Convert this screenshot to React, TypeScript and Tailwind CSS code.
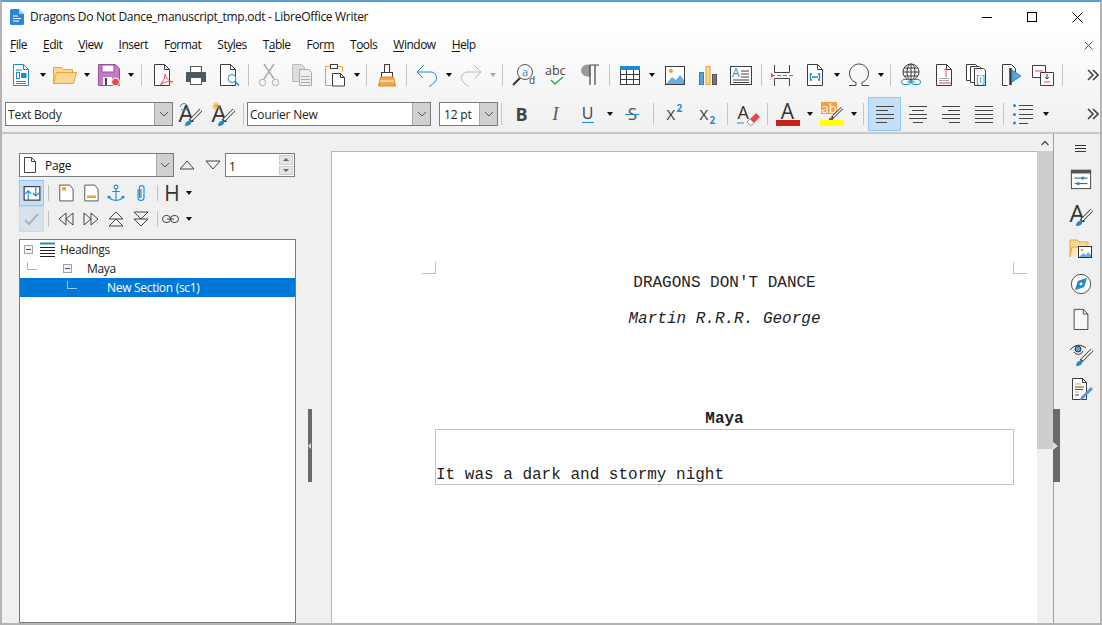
import React from "react";

const B = "#1e8bcd";
const D = "#3c3c3c";
const O = "#e8a33d";
const R = "#e8474c";

function Svg({ children, s = 24 }: { children: React.ReactNode; s?: number }) {
  return (
    <svg width={s} height={s} viewBox="0 0 24 24" fill="none" stroke={D} strokeWidth={1}>
      {children}
    </svg>
  );
}

function Cell({ children, active }: { children?: React.ReactNode; active?: boolean }) {
  return (
    <div className={active ? "w-[33px] h-[34px] shrink-0 flex items-center justify-center bg-[#c4dff6] border border-[#92c9f9]" : "w-[33px] h-[34px] shrink-0 flex items-center justify-center"}>
      {children}
    </div>
  );
}

function Dd({ wide, dim }: { wide?: boolean; dim?: boolean }) {
  return (
    <div className={wide ? "w-[12px] h-[34px] shrink-0 flex items-center justify-center" : "w-[11px] h-[34px] shrink-0 flex items-center justify-center"}>
      <div className={dim ? "w-0 h-0 border-x-[3.5px] border-x-transparent border-t-[4px] border-t-[#a8a8a8]" : "w-0 h-0 border-x-[3.5px] border-x-transparent border-t-[4px] border-t-[#111]"} />
    </div>
  );
}

function Sep({ w }: { w: 7 | 8 | 9 | 10 }) {
  const c = { 7: "w-[7px]", 8: "w-[8px]", 9: "w-[9px]", 10: "w-[10px]" }[w];
  return (
    <div className={c + " shrink-0 flex items-center justify-center"}>
      <div className="w-px h-[22px] bg-[#c4c4c4]" />
    </div>
  );
}

const Chevrons = () => (
  <svg width="12" height="12" viewBox="0 0 12 12" fill="none" stroke="#444" strokeWidth={1.6}>
    <path d="M1 1l5 5-5 5M6 1l5 5-5 5" />
  </svg>
);

function Combo({ w, text, arrowW = "w-[18px]" }: { w: string; text: React.ReactNode; arrowW?: string }) {
  return (
    <div className={w + " h-[24px] shrink-0 flex bg-white border border-[#7a7a7a] text-[12px] text-[#222]"}>
      <div className="flex-1 pl-[2px] pt-[2px] overflow-hidden whitespace-nowrap flex items-center tracking-[-0.2px]">{text}</div>
      <div className={arrowW + " bg-[#d0d0d0] border-l border-[#a8a8a8] flex items-center justify-center"}>
        <svg width="10" height="6" viewBox="0 0 10 6" fill="none" stroke="#555"><path d="M1 1l4 4 4-4" /></svg>
      </div>
    </div>
  );
}

const NewDoc = () => (
  <Svg>
    <path d="M4.5 1.5h10l5 5v16h-15z" stroke={B} fill="#fff" />
    <path d="M14.5 1.5v5h5" stroke={B} />
    <path d="M7 7h6M7 18.5h10M7 20.500h10" stroke={B} />
    <rect x="7.500" y="9.500" width="3" height="6" fill="none" stroke={B} />
    <rect x="12" y="10" width="5.500" height="5" fill={B} stroke="none" />
  </Svg>
);
const Open = () => (
  <Svg>
    <path d="M0.500 20.500v-16h8l2 2h9v3" stroke={O} fill="#fbd78f" />
    <path d="M0.500 20.500l3-11h20l-3 11z" stroke={O} fill="#fbd78f" />
  </Svg>
);
const Save = () => (
  <Svg>
    <path d="M1.500 1.500h17l4 4v17h-21z" fill="#c57ac5" stroke="#9b4f9b" />
    <rect x="5" y="2" width="12" height="7" fill="#fff" stroke="#9b4f9b" />
    <rect x="6" y="14" width="9" height="8" fill="#fff" stroke="none" />
    <rect x="8" y="15" width="2" height="7" fill="#444" stroke="none" />
    <circle cx="18.500" cy="19" r="4" fill={R} stroke="#fff" />
  </Svg>
);
const Pdf = () => (
  <Svg>
    <path d="M3.500 1.500h10l5 5v16h-15z" fill="#fff" />
    <path d="M13.500 1.500v5h5" />
    <path d="M9 22c4-4 5-8 5-11 1 4 3 7 8 8-5-1-9 0-13 3z" stroke={R} fill="#fff" />
  </Svg>
);
const Print = () => (
  <Svg>
    <rect x="6.500" y="3.500" width="11" height="6" fill="#fff" stroke="#4d5a64" />
    <path d="M2 9h20v10H2z" fill="#4d5a64" stroke="none" />
    <rect x="6.500" y="14.500" width="11" height="7" fill="#fff" stroke="#4d5a64" />
  </Svg>
);
const Preview = () => (
  <Svg>
    <path d="M3.500 1.500h10l5 5v16h-15z" fill="#fff" />
    <path d="M13.500 1.500v5h5" />
    <circle cx="15" cy="15.500" r="4" stroke={B} fill="#fff" />
    <path d="M18 18.500l4 4" stroke={B} strokeWidth={1.6} />
  </Svg>
);
const Cut = () => (
  <Svg>
    <path d="M7 1l10 15M17 1L7 16" stroke="#aaa" strokeWidth={1.5} />
    <circle cx="5.500" cy="19.500" r="3.200" stroke="#aaa" />
    <circle cx="18.500" cy="19.500" r="3.200" stroke="#aaa" />
  </Svg>
);
const Copy = () => (
  <Svg>
    <path d="M2.500 1.500h9l3 3v14h-12z" fill="#ddd" stroke="#bbb" />
    <path d="M9.500 6.500h9l3 3v13h-12z" fill="#eee" stroke="#aaa" />
    <path d="M11 13.500h9M11 16.500h9M11 19.500h9" stroke="#aaa" />
  </Svg>
);
const Paste = () => (
  <Svg>
    <path d="M7 3.500H2.500v19H9M15 3.500h4.500V9" stroke={O} fill="none" />
    <rect x="7.500" y="1.500" width="7" height="4" fill="#fff" />
    <path d="M9.500 10.500h8l4 4v8.500h-12z" fill="#fff" />
    <path d="M17.500 10.500v4h4" />
  </Svg>
);
const Clone = () => (
  <Svg>
    <rect x="9.500" y="1.500" width="5" height="8" fill="#fff" />
    <rect x="6.500" y="9.500" width="11" height="5" fill="#fff" />
    <path d="M5.500 14h13l2 9H3.500z" fill="#f8a445" stroke="#e08b2c" />
    <path d="M5 18h14" stroke="#fff" />
  </Svg>
);
const Undo = () => (
  <Svg>
    <path d="M2 9h13a6 6 0 0 1 5 10l-6 5M2 9l7-7M2 9l6 6" stroke={B} />
  </Svg>
);
const Redo = () => (
  <Svg>
    <path d="M22 9H9a6 6 0 0 0-5 10l6 5M22 9l-7-7M22 9l-6 6" stroke="#bbb" />
  </Svg>
);
const Find = () => (
  <Svg>
    <circle cx="13" cy="9" r="7.500" stroke="#555" />
    <path d="M8 15l-7 7" stroke="#333" strokeWidth={2} />
    <text x="10" y="13" fontSize="11" fill={B} stroke="none" fontFamily="'Open Sans',sans-serif">a</text>
    <text x="17" y="21" fontSize="10" fill={D} stroke="none" fontFamily="'Open Sans',sans-serif">d</text>
  </Svg>
);
const Abc = () => (
  <Svg>
    <text x="0" y="12" fontSize="12.500" fill="#444" stroke="none" fontFamily="'Open Sans',sans-serif">abc</text>
    <path d="M6 17l4 4 8-7" stroke="#2eae5a" strokeWidth={1.6} />
  </Svg>
);
const Pilcrow = () => (
  <Svg>
    <path d="M12 2H9a5 5 0 0 0 0 11h3z" fill="#999" stroke="#999" />
    <path d="M12 2h9M12 2v20M17 2v20" stroke="#444" strokeWidth={1.2} />
  </Svg>
);
const Table = () => (
  <Svg>
    <rect x="2.500" y="3.500" width="19" height="18" fill="#fff" />
    <rect x="2" y="3" width="20" height="4" fill={B} stroke="none" />
    <path d="M2.500 11.500h19M2.500 16.500h19M8.500 7v14M15.500 7v14" />
  </Svg>
);
const Img = () => (
  <Svg>
    <rect x="2.500" y="3.500" width="19" height="18" fill="#fff" />
    <circle cx="8" cy="8" r="2" fill={O} stroke="none" />
    <path d="M3 21l6-7 4 3 4-5 4 5v4z" fill="#6aaee0" stroke="none" />
  </Svg>
);
const Chart = () => (
  <Svg>
    <rect x="3.500" y="9.500" width="4" height="12" fill="#5aa3dc" stroke={B} />
    <rect x="10" y="3.500" width="4" height="18" fill="#fbd78f" stroke={O} />
    <rect x="16.500" y="11.500" width="4" height="10" fill="#777" stroke="#555" />
  </Svg>
);
const TextBox = () => (
  <Svg>
    <rect x="1.500" y="3.500" width="21" height="18" fill="#fff" />
    <text x="3" y="14" fontSize="12" fill={B} stroke="none" fontFamily="'Open Sans',sans-serif">A</text>
    <path d="M12 8h8M12 11h8M12 14h8M4 17h16M4 19.500h16" />
  </Svg>
);
const PageBreak = () => (
  <Svg>
    <path d="M4.500 2v7.500h15V2M4.500 23v-7.500h15V23" stroke="#444" />
    <path d="M1 12.500h22" stroke={R} strokeDasharray="4 2" />
    <path d="M1 10l3 2.500-3 2.500z" fill={R} stroke="none" />
  </Svg>
);
const Field = () => (
  <Svg>
    <path d="M4.500 1.500h10l5 5v16h-15z" fill="#fff" />
    <path d="M14.500 1.500v5h5" />
    <path d="M9 11H7.500v6H9M15 11h1.500v6H15M9 14h6" stroke={B} strokeWidth={1.4} />
  </Svg>
);
const Omega = () => (
  <Svg>
    <path d="M2 22.500h7v-3a9.500 9.500 0 1 1 6 0v3h7" stroke="#444" />
  </Svg>
);
const Globe = () => (
  <Svg>
    <circle cx="12" cy="9" r="8" />
    <path d="M4 9h16M5 5h14M5 13h14M12 1v16" />
    <ellipse cx="12" cy="9" rx="4" ry="8" />
    <rect x="2.500" y="16.500" width="9" height="5" rx="2.500" fill="#fff" stroke={B} />
    <rect x="12.500" y="16.500" width="9" height="5" rx="2.500" fill="#fff" stroke={B} />
    <path d="M8 19h8" stroke={B} />
  </Svg>
);
const Footnote = () => (
  <Svg>
    <path d="M4.500 1.500h10l5 5v16h-15z" fill="#fff" />
    <path d="M14.500 1.500v5h5" />
    <path d="M12 7l2-1v8" stroke={R} />
    <path d="M7 15.500h10M7 17.500h10" stroke="#aaa" />
    <path d="M7 20h12" stroke={R} />
  </Svg>
);
const Pages = () => (
  <Svg>
    <path d="M1.500 1.500h9l2 2v14h-11z" fill="#fff" />
    <path d="M5.500 3.500h9l2 2v14h-11z" fill="#fff" />
    <path d="M9.500 5.500h9l2 2v15h-11z" fill="#fff" />
    <text x="11" y="20" fontSize="10" fill={B} stroke="none" fontFamily="'Open Sans',sans-serif">[i]</text>
  </Svg>
);
const Xref = () => (
  <Svg>
    <path d="M4.500 1.500h9l4 4v4M4.500 1.500v21h5" />
    <path d="M12.500 5v17" stroke="#333" strokeWidth={2.500} />
    <path d="M14 7l9 6-9 6z" fill="#5aa3dc" stroke={B} />
  </Svg>
);
const Comment = () => (
  <Svg>
    <path d="M1.500 2.500h13v12h-13z" fill="#fff" />
    <path d="M9.500 9.500h13v13h-13z" fill="#fff" />
    <path d="M4 8h8M13 19h6" stroke={R} />
    <path d="M16 11v5m-2-2l2 2 2-2" />
  </Svg>
);
const Brush = () => (
  <>
    <path d="M23 8L12 19" stroke="#333" strokeWidth={3.500} />
    <path d="M23 8L13 18" stroke="#fff" strokeWidth={1.800} />
    <path d="M7 24c0-4 3-6 6-5 1 3-2 5-6 5z" fill={B} stroke="none" />
  </>
);
const StyleIco = ({ top }: { top: React.ReactNode }) => (
  <div className="relative w-[24px] h-[24px]">
    <span className="absolute left-[1px] top-[-2px] text-[24px] leading-[26px] text-[#333]">A</span>
    <svg width="24" height="24" viewBox="0 0 24 24" fill="none" className="absolute left-0 top-0">
      {top}
      <Brush />
    </svg>
  </div>
);
const AClear = () => (
  <div className="relative w-[24px] h-[24px]">
    <span className="absolute left-[2px] top-[0px] text-[18px] leading-[20px] text-[#333]">A</span>
    <svg width="24" height="24" viewBox="0 0 24 24" fill="none" className="absolute left-0 top-0">
      <path d="M1 21h7" stroke={B} />
      <path d="M14 17l6-6 4 4-6 6z" fill={R} />
      <path d="M11 20l3-3 4 4-2 2h-2z" fill="#fff" stroke="#999" />
    </svg>
  </div>
);
const AColor = () => (
  <div className="w-[24px] h-[24px] flex flex-col items-center">
    <span className="text-[21px] leading-[18px] h-[18px] text-[#333]">A</span>
    <div className="w-[24px] h-[6px] bg-[#c9211e]" />
  </div>
);
const Highlight = () => (
  <div className="relative w-[24px] h-[24px]">
    <div className="absolute left-[1px] top-0 w-[16px] h-[12px] bg-[#fb9d3c]" />
    <span className="absolute left-[2px] top-[-2px] text-[13px] leading-[16px] text-white">ab</span>
    <svg width="24" height="24" viewBox="0 0 24 24" fill="none" className="absolute left-0 top-0">
      <path d="M22 6L12 16" stroke="#333" strokeWidth={3} />
      <path d="M22 6L13 15" stroke="#fff" strokeWidth={1.2} />
      <path d="M9 17h4" stroke="#333" strokeWidth={1.500} />
    </svg>
    <div className="absolute left-0 top-[18px] w-[24px] h-[6px] bg-[#ffff00]" />
  </div>
);
const Align = ({ lines }: { lines: string }) => (
  <Svg>
    <path d={lines} stroke="#444" />
  </Svg>
);
const ListIco = () => (
  <Svg>
    <path d="M7 3.500h14M7 7.500h14M7 12.500h14M7 16.500h14M7 21.500h9" stroke="#444" />
    <circle cx="2.500" cy="3.500" r="1.500" fill={B} stroke="none" />
    <circle cx="2.500" cy="12.500" r="1.500" fill={B} stroke="none" />
    <circle cx="2.500" cy="21" r="1.500" fill={B} stroke="none" />
  </Svg>
);
const XSup = ({ sup }: { sup: boolean }) => (
  <div className="relative w-[24px] h-[24px] text-[#333]">
    <span className="absolute left-[4px] top-[2px] text-[15px] leading-[20px]">X</span>
    <span className={sup ? "absolute left-[14px] top-0 text-[10px] leading-[12px] font-bold text-[#1e8bcd]" : "absolute left-[14px] top-[12px] text-[10px] leading-[12px] font-bold text-[#1e8bcd]"}>2</span>
  </div>
);

const M = ({ a, b }: { a?: string; b: string }) => (
  <span>
    {a}
    <u className="underline-offset-2 decoration-1">{b[0]}</u>
    {b.slice(1)}
  </span>
);

function NavToggle({ children, cls }: { children?: React.ReactNode; cls: string }) {
  return <div className={"w-[25px] h-[26px] shrink-0 flex items-center justify-center " + cls}>{children}</div>;
}

function NavI({ children }: { children: React.ReactNode }) {
  return <div className="w-[25px] h-[26px] shrink-0 flex items-center justify-center">{children}</div>;
}

const NavSep = () => <div className="w-px h-[16px] bg-[#c0c0c0] mx-[4px] shrink-0" />;

const smallDoc = "M4.500 2.500h12l4 5v14h-16z";

const Tri = ({ up }: { up?: boolean }) => (
  <svg width="16" height="10" viewBox="0 0 16 10" fill="none" stroke="#444">
    <path d={up ? "M1 9L8 1l7 8z" : "M1 1l7 8 7-8z"} />
  </svg>
);

function Minus() {
  return (
    <div className="w-[9px] h-[9px] border border-[#a0a0a0] bg-[#f4f4f4] flex items-center justify-center shrink-0">
      <div className="w-[5px] h-px bg-[#2a4a9a]" />
    </div>
  );
}

const Side = ({ children }: { children: React.ReactNode }) => (
  <div className="h-[35px] flex items-center justify-center">{children}</div>
);

export default function App() {
  return (
    <div className="w-[1102px] h-[625px] overflow-hidden flex flex-col bg-white border-t-2 border-t-[#5aa0d8] border-x-2 border-x-[#b4b4b4] border-b-2 border-b-[#b4b4b4] font-['Open_Sans',sans-serif] text-[#111]">
      <div className="flex flex-col -ml-[2px] bg-linear-to-b from-white from-20% to-[#f0f0f0] border-b-2 border-b-[#c8c8c8] h-[132px] shrink-0">
        {/* title */}
        <div className="h-[30px] flex items-center pl-[10px] shrink-0">
          <svg width="14" height="16" viewBox="0 0 14 16" className="mr-[6px]">
            <path d="M1.500 0H9l5 5v9.500a1.500 1.500 0 0 1-1.500 1.500h-11A1.500 1.500 0 0 1 0 14.500v-13A1.500 1.500 0 0 1 1.500 0z" fill="#2a86d8" />
            <path d="M9 0v5h5z" fill="#a8d0f2" />
            <path d="M3 7h5M3 9.500h8M3 12h6" stroke="#fff" />
          </svg>
          <span className="text-[12px] tracking-[-0.3px] whitespace-nowrap">Dragons Do Not Dance_manuscript_tmp.odt - LibreOffice Writer</span>
          <div className="ml-auto flex items-center">
            <div className="w-[45px] flex justify-center"><div className="w-[10px] h-px bg-black" /></div>
            <div className="w-[46px] flex justify-center"><div className="w-[10px] h-[10px] border border-black" /></div>
            <div className="w-[45px] flex justify-center">
              <svg width="11" height="11" viewBox="0 0 11 11" stroke="#000"><path d="M.5.5l10 10M10.500.5l-10 10" /></svg>
            </div>
          </div>
        </div>
        {/* menu */}
        <div className="h-[26px] flex items-center pl-[10px] text-[12px] tracking-[-0.5px] gap-[16px] shrink-0">
          <M b="File" />
          <M b="Edit" />
          <M b="View" />
          <M b="Insert" />
          <M a="F" b="ormat" />
          <M a="Sty" b="les" />
          <M a="T" b="able" />
          <M a="For" b="m" />
          <M a="T" b="ools" />
          <M b="Window" />
          <M b="Help" />
          <div className="ml-auto mr-[7px]">
            <svg width="9" height="9" viewBox="0 0 9 9" stroke="#555"><path d="M.5.5l8 8M8.500.5l-8 8" /></svg>
          </div>
        </div>
        {/* toolbar 1 */}
        <div className="h-[34px] flex items-center pl-[4px] shrink-0">
          <Cell><NewDoc /></Cell><Dd />
          <Cell><Open /></Cell><Dd />
          <Cell><Save /></Cell><Dd />
          <Sep w={10} />
          <Cell><Pdf /></Cell><Cell><Print /></Cell><Cell><Preview /></Cell>
          <Sep w={7} />
          <Cell><Cut /></Cell><Cell><Copy /></Cell><Cell><Paste /></Cell><Dd />
          <Sep w={8} />
          <Cell><Clone /></Cell>
          <Sep w={7} />
          <Cell><Undo /></Cell><Dd />
          <Cell><Redo /></Cell><Dd dim />
          <Sep w={9} />
          <Cell><Find /></Cell><Cell><Abc /></Cell><Cell><Pilcrow /></Cell>
          <Sep w={7} />
          <Cell><Table /></Cell><Dd wide />
          <Cell><Img /></Cell><Cell><Chart /></Cell><Cell><TextBox /></Cell>
          <Sep w={8} />
          <Cell><PageBreak /></Cell><Cell><Field /></Cell><Dd />
          <Cell><Omega /></Cell>
          <Dd />
          <Sep w={8} />
          <Cell><Globe /></Cell><Cell><Footnote /></Cell><Cell><Pages /></Cell><Cell><Xref /></Cell><Cell><Comment /></Cell>
          <Sep w={7} />
          <div className="ml-[21px]"><Chevrons /></div>
        </div>
        {/* toolbar 2 */}
        <div className="h-[34px] mt-[5px] flex items-center pl-[5px] shrink-0">
          <Combo w="w-[168px]" text="Text Body" />
          <Cell>
            <StyleIco top={<path d="M2 5a4 4 0 0 1 7-2M10 5a4 4 0 0 1-7 2" stroke={B} />} />
          </Cell>
          <Cell>
            <StyleIco top={<path d="M5 0v8M1 4h8M2 1l6 6M8 1L2 7" stroke="#f39c32" />} />
          </Cell>
          <Sep w={8} />
          <Combo w="w-[184px]" text="Courier New" />
          <div className="w-[8px] shrink-0" />
          <Combo w="w-[59px]" text={<span className="pl-[2px]">12 pt</span>} />
          <Sep w={7} />
          <Cell><span className="text-[18px] font-bold text-[#444]">B</span></Cell>
          <Cell><span className="text-[18px] italic font-['Liberation_Serif',serif] text-[#555] pl-[2px]">I</span></Cell>
          <Cell>
            <div className="flex flex-col items-center">
              <span className="text-[16px] leading-[17px] text-[#444]">U</span>
              <div className="w-[12px] h-px bg-[#1e8bcd]" />
            </div>
          </Cell>
          <Dd wide />
          <Cell>
            <div className="relative flex items-center justify-center">
              <span className="text-[17px] leading-[20px] text-[#555]">S</span>
              <div className="absolute w-[14px] h-px bg-[#1e8bcd]" />
            </div>
          </Cell>
          <Sep w={9} />
          <Cell><XSup sup /></Cell>
          <Cell><XSup sup={false} /></Cell>
          <Sep w={7} />
          <Cell><AClear /></Cell>
          <Sep w={7} />
          <Cell><AColor /></Cell><Dd />
          <Cell><Highlight /></Cell><Dd />
          <Sep w={9} />
          <Cell active><Align lines="M3 4.500h18M3 8.500h12M3 12.500h18M3 16.500h18M3 20.500h11" /></Cell>
          <Cell><Align lines="M3 4.500h18M6 8.500h12M3 12.500h18M3 16.500h18M7 20.500h10" /></Cell>
          <Cell><Align lines="M3 4.500h18M9 8.500h12M3 12.500h18M3 16.500h18M10 20.500h11" /></Cell>
          <Cell><Align lines="M3 4.500h18M3 8.500h18M3 12.500h18M3 16.500h18M3 20.500h18" /></Cell>
          <Sep w={7} />
          <Cell><ListIco /></Cell><Dd />
          <div className="ml-[36px]"><Chevrons /></div>
        </div>
      </div>

      {/* main */}
      <div className="flex flex-1 min-h-0 bg-[#f0f0f0]">
        {/* navigator */}
        <div className="w-[277px] ml-[17px] shrink-0 flex flex-col pt-[19px]">
          <div className="flex items-center h-[24px]">
            <div className="w-[155px] h-[24px] flex bg-white border border-[#7a7a7a] text-[12px] shrink-0">
              <div className="flex-1 flex items-center pl-[4px] gap-[9px]">
                <svg width="12" height="16" viewBox="0 0 12 16" fill="#fff" stroke="#444"><path d="M.5.500h7l4 4v11H.5zM7.500.500v4h4" /></svg>
                <span className="pt-[2px] tracking-[-0.2px]">Page</span>
              </div>
              <div className="w-[17px] bg-[#d0d0d0] border-l border-[#a8a8a8] flex items-center justify-center">
                <svg width="10" height="6" viewBox="0 0 10 6" fill="none" stroke="#555"><path d="M1 1l4 4 4-4" /></svg>
              </div>
            </div>
            <div className="w-[26px] flex justify-center"><Tri up /></div>
            <div className="w-[25px] flex justify-center"><Tri /></div>
            <div className="w-[70px] h-[24px] flex bg-white border border-[#7a7a7a] text-[12px] shrink-0">
              <div className="flex-1 pl-[3px] pt-[2px] leading-[22px]">1</div>
              <div className="w-[16px] flex flex-col p-px gap-px">
                <div className="flex-1 bg-[#e4e4e4] border border-[#ccc] flex items-center justify-center"><div className="w-0 h-0 border-x-[3px] border-x-transparent border-b-[3px] border-b-[#666]" /></div>
                <div className="flex-1 bg-[#e4e4e4] border border-[#ccc] flex items-center justify-center"><div className="w-0 h-0 border-x-[3px] border-x-transparent border-t-[3px] border-t-[#666]" /></div>
              </div>
            </div>
          </div>
          <div className="flex items-center h-[26px] mt-[3px]">
            <NavToggle cls="bg-[#c4dff6] border border-[#92c9f9]">
              <Svg s={18}>
                <rect x="1.500" y="3.500" width="21" height="18" fill="#fff" stroke="#333" strokeWidth={1.5} />
                <path d="M17 3v13m-4-4l4 4 4-4M7 22V9m-4 4l4-4 4 4" stroke={B} strokeWidth={1.5} />
              </Svg>
            </NavToggle>
            <NavSep />
            <NavI>
              <Svg s={20}>
                <path d={smallDoc} fill="#fff" />
                <rect x="7" y="5" width="5" height="4" fill={O} stroke="none" />
              </Svg>
            </NavI>
            <NavI>
              <Svg s={20}>
                <path d={smallDoc} fill="#fff" />
                <rect x="7" y="15" width="11" height="3" fill={O} stroke="none" />
              </Svg>
            </NavI>
            <NavI>
              <Svg s={18}>
                <circle cx="12" cy="4" r="2.500" stroke={B} strokeWidth={1.5} />
                <path d="M12 6.500V22M7 10h10M2 16c0 3 5 6 10 6s10-3 10-6M2 16l-1 3M2 16l3 2M22 16l1 3M22 16l-3 2" stroke={B} strokeWidth={1.5} />
              </Svg>
            </NavI>
            <NavI>
              <Svg s={18}>
                <path d="M8 7v11a4 4 0 0 0 8 0V5a3 3 0 0 0-6 0v12a1 1 0 0 0 2 0V7" stroke={B} strokeWidth={1.5} />
              </Svg>
            </NavI>
            <NavSep />
            <span className="text-[21px] leading-none text-[#333] w-[20px] text-center">H</span>
            <div className="w-0 h-0 ml-[4px] border-x-[3.5px] border-x-transparent border-t-[4px] border-t-[#111]" />
          </div>
          <div className="flex items-center h-[26px]">
            <NavToggle cls="bg-[#d6e3ef] border border-[#c8d8e8]">
              <svg width="16" height="14" viewBox="0 0 16 14" fill="none" stroke="#b0b0b0" strokeWidth={2}><path d="M1 8l4 4 9-10" /></svg>
            </NavToggle>
            <NavSep />
            <NavI>
              <svg width="16" height="14" viewBox="0 0 16 14" fill="none" stroke="#444"><path d="M1 7l7-6v12zM8 7l7-6v12z" /></svg>
            </NavI>
            <NavI>
              <svg width="16" height="14" viewBox="0 0 16 14" fill="none" stroke="#444"><path d="M15 7L8 1v12zM8 7L1 1v12z" /></svg>
            </NavI>
            <NavI>
              <svg width="16" height="16" viewBox="0 0 16 16" fill="none" stroke="#444"><path d="M8 1l7 7H1zM8 8l7 7H1z" /></svg>
            </NavI>
            <NavI>
              <svg width="16" height="16" viewBox="0 0 16 16" fill="none" stroke="#444"><path d="M1 1h14L8 8zM1 8h14l-7 7z" /></svg>
            </NavI>
            <NavSep />
            <div className="w-[17px] flex justify-center">
              <svg width="17" height="8" viewBox="0 0 17 8" fill="none" stroke="#444"><rect x=".5" y=".5" width="8" height="7" rx="3.500" /><rect x="8.500" y=".5" width="8" height="7" rx="3.500" /><path d="M5 4h7" /></svg>
            </div>
            <div className="w-0 h-0 ml-[7px] border-x-[3.5px] border-x-transparent border-t-[4px] border-t-[#111]" />
          </div>
          <div className="flex-1 mt-[7px] bg-white border border-[#7a7a7a] text-[12px] tracking-[-0.3px] text-[#222]">
            <div className="h-[19px] flex items-center pl-[4px]">
              <Minus />
              <svg width="15" height="15" viewBox="0 0 15 15" className="ml-[7px] mr-[5px]" stroke="#222"><path d="M0 1.500h15" stroke="#1e8bcd" strokeWidth={2} /><path d="M0 5.500h15M0 8.500h15M0 11.500h15M0 14.500h15" /></svg>
              <span>Headings</span>
            </div>
            <div className="h-[19px] flex items-center pl-[7px]">
              <div className="w-[10px] h-[8px] border-l border-b border-[#b0b0b0] -mt-[6px] mr-[26px]" />
              <Minus />
              <span className="ml-[15px]">Maya</span>
            </div>
            <div className="h-[19px] flex items-center pl-[47px] bg-[#0078d7] text-white">
              <div className="w-[10px] h-[8px] border-l border-b border-[#a8c8e8] -mt-[6px] mr-[30px]" />
              <span>New Section (sc1)</span>
            </div>
          </div>
        </div>

        {/* splitter left */}
        <div className="w-[35px] shrink-0 pt-[275px] pl-[12px]">
          <div className="w-[4px] h-[73px] bg-[#696969] flex items-center">
            <div className="w-0 h-0 border-y-[3px] border-y-transparent border-r-[3px] border-r-[#ddd]" />
          </div>
        </div>

        {/* document */}
        <div className="w-[706px] shrink-0 flex flex-col pt-[17px]">
          <div className="flex-1 bg-white border-l border-t border-[#b4b4b4] flex flex-col items-start pl-[103px] font-['Liberation_Mono',monospace] text-[16px] leading-[18px] text-[#222] relative">
            <div className="absolute left-[90px] top-[110px] w-[14px] h-[12px] border-r border-b border-[#c0c0c0]" />
            <div className="absolute left-[681px] top-[110px] w-[14px] h-[12px] border-l border-b border-[#c0c0c0]" />
            <div className="w-[579px] flex flex-col items-center pt-[122px]">
              <div>DRAGONS DON'T DANCE</div>
              <div className="italic mt-[18px]">Martin R.R.R. George</div>
              <div className="font-bold mt-[82px]">Maya</div>
              <div className="w-full h-[56px] mt-px border border-[#c0c0c0] flex flex-col justify-end">
                <div>It was a dark and stormy night</div>
              </div>
            </div>
          </div>
        </div>

        {/* scrollbar */}
        <div className="w-[16px] shrink-0 flex flex-col bg-[#f0f0f0]">
          <div className="h-[17px] flex items-center justify-center">
            <svg width="8" height="6" viewBox="0 0 8 6" fill="none" stroke="#555" strokeWidth={1.5}><path d="M.5 5L4 1.500 7.500 5" /></svg>
          </div>
          <div className="h-[298px] bg-[#cdcdcd]" />
        </div>

        {/* right sidebar */}
        <div className="flex-1 min-w-0 relative border-l border-[#a0a0a0] flex flex-col pl-[7px]">
          <div className="absolute -left-px top-[275px] w-[7px] h-[73px] bg-[#696969] flex items-center">
            <div className="w-0 h-0 border-y-[4px] border-y-transparent border-l-[5px] border-l-[#ddd]" />
          </div>
          <div className="h-[27px] flex items-center justify-center pt-[2px]">
            <svg width="11" height="8" viewBox="0 0 11 8" stroke="#333"><path d="M0 .5h11M0 3.500h11M0 6.500h11" /></svg>
          </div>
          <Side>
            <Svg s={22}>
              <rect x="1.500" y="2.500" width="21" height="20" fill="#fff" />
              <rect x="1" y="2" width="22" height="4" fill="#555" stroke="none" />
              <path d="M5 11h14M5 17h14" />
              <circle cx="14" cy="11" r="1.800" fill={B} stroke="none" />
              <circle cx="9" cy="17" r="1.800" fill={B} stroke="none" />
            </Svg>
          </Side>
          <Side>
            <StyleIco top={null} />
          </Side>
          <Side>
            <Svg s={24}>
              <path d="M1 20V3h7l2 2h9v3" stroke={O} fill="#fbd78f" />
              <path d="M1 20l2-10h20l-1 3" stroke={O} fill="#fde7bb" />
              <rect x="9.500" y="9.500" width="13" height="11" fill="#fff" stroke="#333" />
              <circle cx="13" cy="13" r="1.300" fill={O} stroke="none" />
              <path d="M10 20l4-4 3 2 2-3 3 3v2z" fill="#6aaee0" stroke="none" />
            </Svg>
          </Side>
          <Side>
            <Svg s={22}>
              <circle cx="12" cy="12" r="10.500" stroke="#444" fill="#fff" />
              <path d="M18 6l-3 9-9 3 3-9z" fill={B} stroke={B} />
              <circle cx="12" cy="12" r="1.600" fill="#fff" stroke="none" />
            </Svg>
          </Side>
          <Side>
            <Svg s={22}>
              <path d="M4.500 1.500h10l5 5v17h-15z" fill="#f8f8f8" />
              <path d="M14.500 1.500v5h5" />
            </Svg>
          </Side>
          <Side>
            <Svg s={24}>
              <path d="M1 8c5-6 11-6 16-2" fill="none" />
              <path d="M5 10a5 5 0 0 0 9-1" />
              <circle cx="9" cy="7" r="3" fill="#5aa3dc" stroke="#333" />
              <Brush />
            </Svg>
          </Side>
          <Side>
            <Svg s={24}>
              <path d="M3.500 1.500h10l4 4v17h-14z" fill="#fff" />
              <path d="M13.500 1.500v4h4" />
              <path d="M6 7h6M6 15h4" stroke={O} />
              <path d="M6 10h9M6 12.500h8M6 18h4" stroke="#444" />
              <path d="M22 10L12 20l-1 3 3-1 10-10z" fill="#4a9ad8" stroke="none" />
            </Svg>
          </Side>
        </div>
      </div>
    </div>
  );
}
